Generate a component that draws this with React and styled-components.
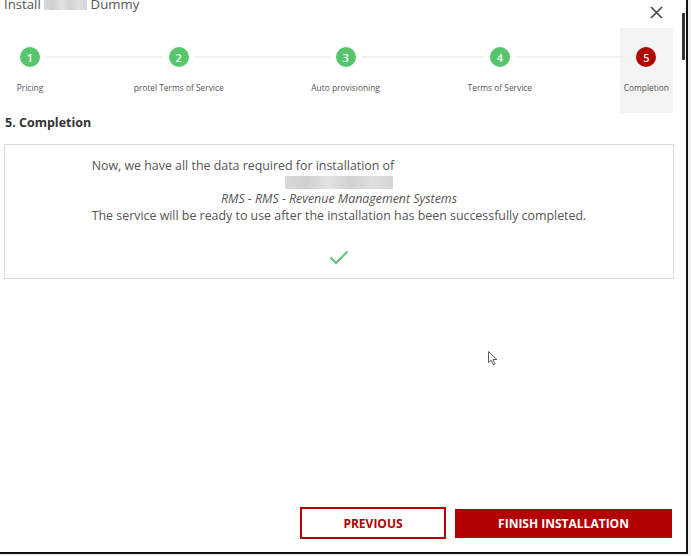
import React from 'react';
import styled, { createGlobalStyle } from 'styled-components';

const GlobalStyle = createGlobalStyle`
  html, body {
    margin: 0;
    background: #f1f1f1;
    font-family: "Open Sans", "Noto Sans", sans-serif;
  }
`;

const steps = [
  { n: 1, label: 'Pricing' },
  { n: 2, label: 'protel Terms of Service' },
  { n: 3, label: 'Auto provisioning' },
  { n: 4, label: 'Terms of Service' },
  { n: 5, label: 'Completion', active: true },
];

const App = () => {
  return (
    <>
      <GlobalStyle />
      <Frame>
        <Header>
          <Title>
            Install <Blur $w={43} /> Dummy
          </Title>
          <CloseButton aria-label="close">
            <svg width="13" height="13" viewBox="0 0 13 13">
              <path d="M1 1L12 12M12 1L1 12" stroke="#444" strokeWidth="1.6" fill="none" />
            </svg>
          </CloseButton>
        </Header>

        <Stepper>
          {steps.map((s, i) => (
            <React.Fragment key={s.n}>
              {i > 0 && <Connector />}
              <Step $active={s.active}>
                <CircleRow $active={s.active}>
                  <HalfLine $hidden={i === 0} $side="left" />
                  <Circle $active={s.active}>{s.n}</Circle>
                  <HalfLine $hidden={i === steps.length - 1} $side="right" />
                </CircleRow>
                <StepLabel>{s.label}</StepLabel>
              </Step>
            </React.Fragment>
          ))}
        </Stepper>

        <SectionTitle>5. Completion</SectionTitle>

        <ContentBox>
          <Message>
            <Line>Now, we have all the data required for installation of</Line>
            <Line $center>
              <Blur $w={108} $h={13} />
            </Line>
            <Line $center $italic>RMS - RMS - Revenue Management Systems</Line>
            <Line>The service will be ready to use after the installation has been successfully completed.</Line>
          </Message>
          <Check>
            <svg width="20" height="15" viewBox="0 0 20 15">
              <path d="M1.5 7.5L7 13L18.5 1.5" stroke="#5cc46e" strokeWidth="2" fill="none" />
            </svg>
          </Check>
        </ContentBox>

        <Cursor>
          <svg width="10" height="15" viewBox="0 0 10 15">
            <path d="M0.5 0.5V11.5L3.2 9.2L5.2 13.8L7 13L5 8.5H8.8Z" fill="#fff" stroke="#333" strokeWidth="0.8" />
          </svg>
        </Cursor>

        <Footer>
          <OutlineButton>PREVIOUS</OutlineButton>
          <PrimaryButton>FINISH INSTALLATION</PrimaryButton>
        </Footer>

        <ScrollThumb />
      </Frame>
    </>
  );
};

export default App;

const Frame = styled.div`
  position: relative;
  width: 688px;
  height: 554px;
  box-sizing: border-box;
  background: #fff;
  border-right: 2px solid #111;
  border-bottom: 2px solid #111;
  display: flex;
  flex-direction: column;
  overflow: hidden;
`;

const Header = styled.div`
  display: flex;
  justify-content: space-between;
  align-items: flex-start;
  padding: 0 23px 0 4px;
  height: 28px;
`;

const Title = styled.div`
  margin-top: -6px;
  font-size: 13.2px;
  line-height: 20px;
  color: #555;
  display: flex;
  align-items: center;
  white-space: pre;
`;

const Blur = styled.span`
  display: inline-block;
  width: ${p => p.$w}px;
  height: ${p => p.$h || 12}px;
  background: linear-gradient(90deg, #d9d9d9, #cfcfcf 20%, #e3e3e3 40%, #d2d2d2 60%, #dedede 80%, #d6d6d6);
  filter: blur(0.6px);
  vertical-align: middle;
`;

const CloseButton = styled.button`
  border: none;
  background: none;
  padding: 0;
  margin-top: 6px;
  width: 13px;
  height: 13px;
  display: flex;
  cursor: pointer;
`;

const Stepper = styled.div`
  display: flex;
  align-items: flex-start;
  padding: 0 13px 0 14px;
`;

const Connector = styled.div`
  flex: 1;
  height: 2px;
  margin-top: 28px;
  background: #f1f1f1;
`;

const Step = styled.div`
  display: flex;
  flex-direction: column;
  align-items: center;
  padding: 19px ${p => (p.$active ? 4 : 0)}px 19px;
  background: ${p => (p.$active ? '#f3f3f3' : 'transparent')};
`;

const CircleRow = styled.div`
  display: flex;
  align-items: center;
  align-self: stretch;
  margin: 0 ${p => (p.$active ? -4 : 0)}px;
`;

const HalfLine = styled.div`
  flex: 1;
  height: 2px;
  background: ${p => (p.$hidden ? 'transparent' : '#f1f1f1')};
  margin: ${p => (p.$side === 'left' ? '0 6px 0 0' : '0 0 0 6px')};
`;

const Circle = styled.div`
  width: 20px;
  height: 20px;
  flex: none;
  border-radius: 50%;
  background: ${p => (p.$active ? '#b20000' : '#56c56b')};
  color: #fff;
  font-size: 11px;
  font-weight: 600;
  display: flex;
  align-items: center;
  justify-content: center;
`;

const StepLabel = styled.div`
  margin-top: 15px;
  font-size: 8.4px;
  line-height: 12px;
  color: #555;
  white-space: nowrap;
`;

const SectionTitle = styled.div`
  padding: 1px 5px 0;
  font-size: 12.5px;
  font-weight: 700;
  line-height: 18px;
  color: #333;
`;

const ContentBox = styled.div`
  margin: 12px 12px 0 4px;
  border: 1px solid #dcdcdc;
  padding: 13px 0 13px;
  display: flex;
  flex-direction: column;
  align-items: center;
`;

const Message = styled.div`
  width: fit-content;
  font-size: 12.4px;
  line-height: 16.5px;
  color: #555;
`;

const Line = styled.div`
  text-align: ${p => (p.$center ? 'center' : 'left')};
  font-style: ${p => (p.$italic ? 'italic' : 'normal')};
  min-height: 16.5px;
  display: ${p => (p.$center ? 'flex' : 'block')};
  justify-content: center;
  align-items: center;
`;

const Check = styled.div`
  margin-top: 26px;
  display: flex;
`;

const Cursor = styled.div`
  position: absolute;
  left: 488px;
  top: 351px;
  display: flex;
`;

const Footer = styled.div`
  margin-top: auto;
  display: flex;
  justify-content: flex-end;
  align-items: center;
  gap: 9px;
  padding: 0 14px 13px 0;
`;

const OutlineButton = styled.button`
  width: 146px;
  height: 32px;
  border: 2px solid #b20000;
  background: #fff;
  color: #b20000;
  font-family: "Open Sans", sans-serif;
  font-weight: 700;
  font-size: 12px;
  cursor: pointer;
`;

const PrimaryButton = styled.button`
  width: 217px;
  height: 29px;
  border: none;
  background: #b20000;
  color: #fff;
  font-family: "Open Sans", sans-serif;
  font-weight: 700;
  font-size: 12px;
  cursor: pointer;
`;

const ScrollThumb = styled.div`
  position: absolute;
  right: 1px;
  top: 13px;
  width: 3px;
  height: 47px;
  background: #333;
  border-radius: 1px;
`;
